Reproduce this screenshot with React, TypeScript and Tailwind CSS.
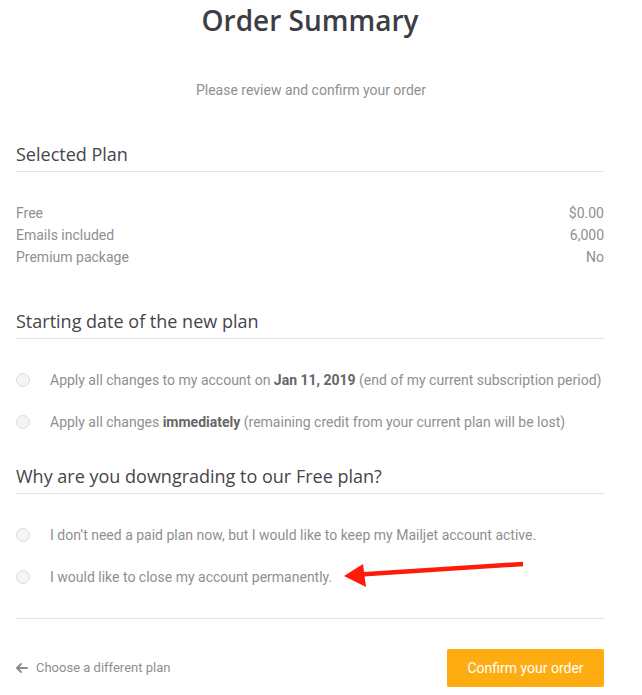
import React from "react";

const Radio = ({ children }: { children: React.ReactNode }) => (
  <label className="flex items-center h-[22px]">
    <span className="w-[14px] h-[14px] rounded-full border border-[#dcdcdc] bg-[#f4f4f4] shrink-0" />
    <span className="ml-[20px] text-[14px] leading-[22px] text-[#8f8f8f] whitespace-nowrap">{children}</span>
  </label>
);

const Heading = ({ children, mt }: { children: React.ReactNode; mt: string }) => (
  <div className={`${mt} border-b border-[#e2e2e2] pb-[5px]`}>
    <h2 className="text-[18px] leading-[24px] text-[#45454d]" style={{ fontFamily: '"Open Sans", sans-serif' }}>
      {children}
    </h2>
  </div>
);

export default function App() {
  return (
    <div className="relative w-[642px] h-[695px] bg-white overflow-hidden" style={{ fontFamily: 'Roboto, "Liberation Sans", sans-serif' }}>
      <div className="ml-[16px] w-[588px] flex flex-col">
        <h1
          className="text-center text-[28px] leading-[40px] text-[#3d3d45] font-semibold"
          style={{ fontFamily: '"Open Sans", sans-serif' }}
        >
          Order Summary
        </h1>
        <p className="mt-[40px] text-center text-[14px] leading-[20px] text-[#8f8f8f] ml-[2px]">
          Please review and confirm your order
        </p>

        <Heading mt="mt-[42px]">Selected Plan</Heading>
        <div className="mt-[30px] flex flex-col text-[14px] leading-[22px] text-[#8f8f8f]">
          <div className="flex justify-between"><span>Free</span><span>$0.00</span></div>
          <div className="flex justify-between"><span>Emails included</span><span>6,000</span></div>
          <div className="flex justify-between"><span>Premium package</span><span>No</span></div>
        </div>

        <Heading mt="mt-[41px]">Starting date of the new plan</Heading>
        <div className="mt-[30px] flex flex-col gap-[20px]">
          <Radio>
            Apply all changes to my account on <b className="font-bold text-[#666]">Jan 11, 2019</b> (end of my current subscription period)
          </Radio>
          <Radio>
            Apply all changes <b className="font-bold text-[#666]">immediately</b> (remaining credit from your current plan will be lost)
          </Radio>
        </div>

        <Heading mt="mt-[31px]">Why are you downgrading to our Free plan?</Heading>
        <div className="mt-[30px] flex flex-col gap-[20px]">
          <Radio>I don’t need a paid plan now, but I would like to keep my Mailjet account active.</Radio>
          <Radio>I would like to close my account permanently.</Radio>
        </div>

        <div className="mt-[30px] h-px bg-[#e2e2e2]" />

        <div className="mt-[30px] flex items-center justify-between">
          <a className="flex items-center text-[13px] text-[#8f8f8f]">
            <svg width="12" height="10" viewBox="0 0 12 10" className="mr-[8px]">
              <path d="M5 1 L1 5 L5 9" fill="none" stroke="#8a8a8a" strokeWidth="1.8" strokeLinecap="round" strokeLinejoin="round" />
              <path d="M1.5 5 H11" stroke="#8a8a8a" strokeWidth="1.8" strokeLinecap="round" />
            </svg>
            Choose a different plan
          </a>
          <button className="w-[157px] h-[38px] rounded-[2px] bg-[#fdad12] text-white text-[14px]">
            Confirm your order
          </button>
        </div>
      </div>

      <svg className="absolute left-0 top-0 pointer-events-none" width="642" height="695">
        <line x1="523" y1="564" x2="360" y2="574.5" stroke="#ff1a0a" strokeWidth="4.5" />
        <polygon points="344,576 363,564 366,587" fill="#ff1a0a" />
      </svg>
    </div>
  );
}
